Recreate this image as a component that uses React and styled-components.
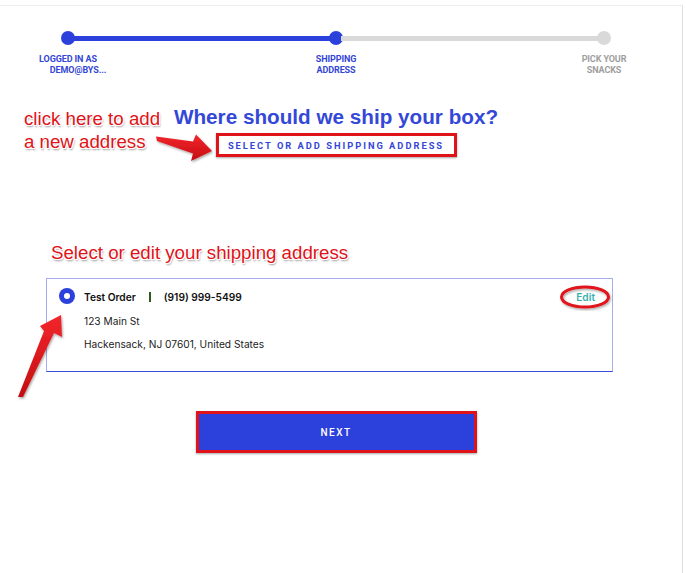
import React from 'react';
import styled, { createGlobalStyle } from 'styled-components';

const GlobalStyle = createGlobalStyle`
    html, body {
        margin: 0;
        padding: 0;
        background: #fff;
    }
    body {
        font-family: Inter, "Noto Sans", Arial, sans-serif;
    }
`;

const BLUE = '#2c40dc';
const RED = '#e0121a';

const Page = styled.div`
    position: relative;
    width: 686px;
    height: 573px;
    overflow: hidden;
    padding-top: 5px;
    box-sizing: border-box;
`;

const Frame = styled.div`
    width: 683px;
    height: 568px;
    box-sizing: border-box;
    border-top: 1px solid #ececec;
    border-right: 1px solid #dedede;
    padding-top: 25px;
`;

const Column = styled.div`
    width: 550px;
    margin-left: 61px;
`;

const Stepper = styled.div`
    display: grid;
    grid-template-columns: 14px 1fr 14px 1fr 14px;
    grid-template-rows: 14px auto;
    row-gap: 9px;
`;

const Dot = styled.div`
    width: 14px;
    height: 14px;
    border-radius: 50%;
    background: ${p => (p.$done ? BLUE : '#d9d9d9')};
`;

const Bar = styled.div`
    height: 5px;
    align-self: center;
    margin: 0 -2px;
    background: ${p => (p.$done ? BLUE : '#d9d9d9')};
`;

const StepLabel = styled.div`
    grid-row: 2;
    grid-column: ${p => p.$col};
    justify-self: center;
    width: 100px;
    text-align: center;
    font-family: "Liberation Sans Narrow", Roboto, "Liberation Sans", sans-serif;
    font-weight: 700;
    font-size: 9px;
    line-height: 11px;
    letter-spacing: -0.1px;
    color: ${p => (p.$done ? '#3446d6' : '#9e9e9e')};
    span {
        display: block;
    }
    span + span {
        padding-left: ${p => p.$shift || 0}px;
    }
`;

const Heading = styled.div`
    display: flex;
    flex-direction: column;
    align-items: center;
    margin-top: ${p => p.$top || 0}px;
`;

const Title = styled.h1`
    margin: 0;
    font-family: "Liberation Sans", Arial, sans-serif;
    font-weight: 700;
    font-size: 20.7px;
    line-height: 24px;
    color: #3448d8;
`;

const Highlight = styled.div`
    border: 3px solid ${RED};
    box-shadow: 0 1px 2px rgba(0, 0, 0, 0.35);
    display: flex;
    margin-top: ${p => p.$top || 0}px;
    margin-left: ${p => p.$left || 0}px;
`;

const LinkButton = styled.button`
    width: 235px;
    height: 18px;
    padding: 0;
    border: 0;
    background: #fff;
    font-family: Roboto, "Liberation Sans", sans-serif;
    font-weight: 700;
    font-size: 9.3px;
    letter-spacing: 2px;
    color: #3446d6;
`;

const Card = styled.div`
    margin-top: 121px;
    margin-left: 46px;
    width: 567px;
    height: 94px;
    box-sizing: border-box;
    border: 1px solid #a6acef;
    border-bottom-color: #3a4cd8;
    padding: 9px 17px 0 12px;
    display: flex;
    gap: 9px;
`;

const Radio = styled.div`
    width: 16px;
    height: 16px;
    flex: none;
    border-radius: 50%;
    background: ${BLUE};
    display: flex;
    align-items: center;
    justify-content: center;
    &::after {
        content: "";
        width: 6px;
        height: 6px;
        border-radius: 50%;
        background: #fff;
    }
`;

const Info = styled.div`
    flex: 1;
    display: flex;
    flex-direction: column;
    gap: 9.5px;
    padding-top: 2px;
    font-size: 10.2px;
    line-height: 14px;
    color: #222;
`;

const TopLine = styled.div`
    display: flex;
    align-items: center;
    font-weight: 600;
    color: #111;
`;

const Sep = styled.span`
    width: 2px;
    height: 10px;
    background: #2e5a1e;
    margin: 0 13px;
`;

const Edit = styled.span`
    margin-left: auto;
    color: #38b0b0;
    font-weight: 600;
`;

const NextButton = styled.button`
    width: 275px;
    height: 36px;
    border: 0;
    padding: 0;
    background: ${BLUE};
    color: #fff;
    font-family: Roboto, "Liberation Sans", sans-serif;
    font-weight: 500;
    font-size: 10px;
    letter-spacing: 1.5px;
`;

const Note = styled.div`
    position: absolute;
    left: ${p => p.$x}px;
    top: ${p => p.$y}px;
    font-family: "Liberation Sans", Arial, sans-serif;
    font-size: 18.7px;
    line-height: 23px;
    color: ${RED};
    white-space: nowrap;
    text-shadow: 1px 1px 0 #fff, -1px -1px 0 #fff, 1px -1px 0 #fff, -1px 1px 0 #fff,
        1px 2px 2px rgba(0, 0, 0, 0.45);
`;

const Overlay = styled.svg`
    position: absolute;
    left: 0;
    top: 0;
    pointer-events: none;
`;

export default function App() {
    return (
        <Page>
            <GlobalStyle />
            <Frame>
                <Column>
                    <Stepper>
                        <Dot $done />
                        <Bar $done />
                        <Dot $done />
                        <Bar />
                        <Dot />
                        <StepLabel $col={1} $done $shift={20}>
                            <span>LOGGED IN AS</span>
                            <span>DEMO@BYS...</span>
                        </StepLabel>
                        <StepLabel $col={3} $done>
                            <span>SHIPPING</span>
                            <span>ADDRESS</span>
                        </StepLabel>
                        <StepLabel $col={5}>
                            <span>PICK YOUR</span>
                            <span>SNACKS</span>
                        </StepLabel>
                    </Stepper>
                    <Heading $top={29}>
                        <Title>Where should we ship your box?</Title>
                        <Highlight $top={4} $left={0}>
                            <LinkButton>SELECT OR ADD SHIPPING ADDRESS</LinkButton>
                        </Highlight>
                    </Heading>
                </Column>
                <Card>
                    <Radio />
                    <Info>
                        <TopLine>
                            Test Order
                            <Sep />
                            (919) 999-5499
                            <Edit>Edit</Edit>
                        </TopLine>
                        <div>123 Main St</div>
                        <div>Hackensack, NJ 07601, United States</div>
                    </Info>
                </Card>
                <Column>
                    <Heading>
                        <Highlight $top={39} $left={0}>
                            <NextButton>NEXT</NextButton>
                        </Highlight>
                    </Heading>
                </Column>
            </Frame>
            <Note $x={24} $y={107}>
                click here to add
                <br />
                a new address
            </Note>
            <Note $x={51} $y={241}>Select or edit your shipping address</Note>
            <Overlay width="686" height="573" viewBox="0 0 686 573">
                <defs>
                    <filter id="sh" x="-20%" y="-20%" width="140%" height="140%">
                        <feDropShadow dx="1" dy="1.5" stdDeviation="1" floodColor="#000" floodOpacity="0.35" />
                    </filter>
                    <linearGradient id="rg" x1="0" y1="0" x2="0" y2="1">
                        <stop offset="0" stopColor="#f2262b" />
                        <stop offset="1" stopColor="#c40d12" />
                    </linearGradient>
                </defs>
                <polygon
                    points="156,136.5 193,141.5 196,134.5 212,151 191,161 193,153.5 157,141"
                    fill="url(#rg)"
                    filter="url(#sh)"
                />
                <polygon
                    points="18,397 44,331 40,326 61,315 62,337 54,333 23,397"
                    fill="url(#rg)"
                    filter="url(#sh)"
                />
                <ellipse cx="585" cy="297" rx="23.5" ry="10" fill="none" stroke={RED} strokeWidth="3" filter="url(#sh)" />
            </Overlay>
        </Page>
    );
}
